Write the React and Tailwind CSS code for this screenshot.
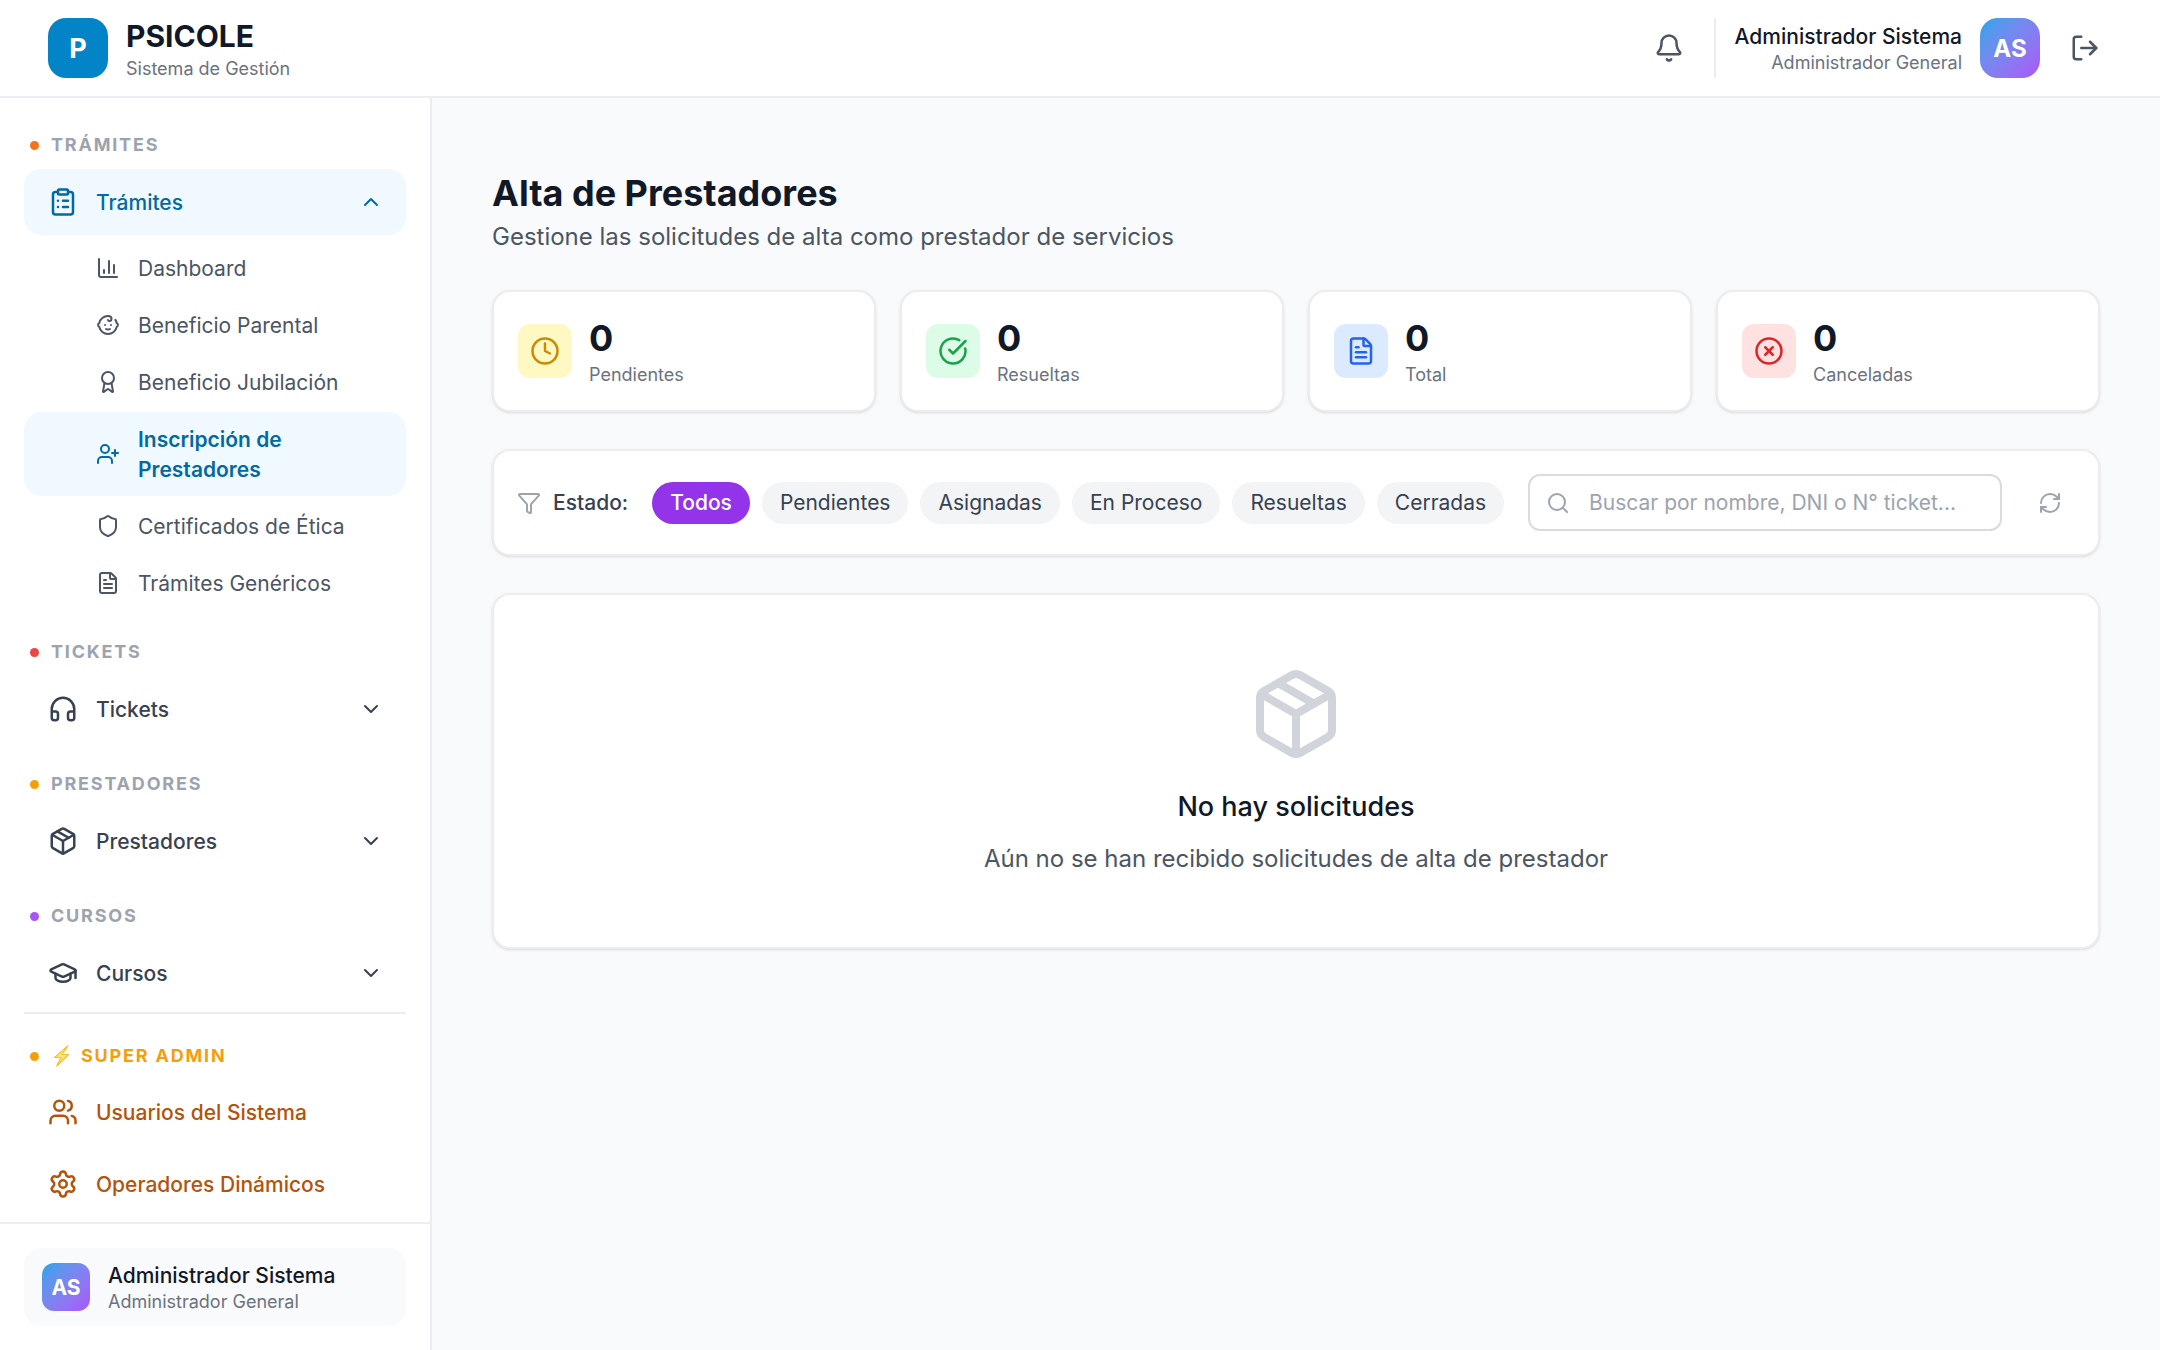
import {
  Award,
  Baby,
  Bell,
  ChartColumn,
  ChevronDown,
  ChevronUp,
  CircleCheckBig,
  CircleX,
  ClipboardList,
  Clock,
  FileText,
  Funnel,
  GraduationCap,
  Headphones,
  LogOut,
  Package,
  RefreshCw,
  Search,
  Settings,
  Shield,
  UserPlus,
  Users,
} from 'lucide-react'

const subItems = [
  { label: 'Dashboard', icon: ChartColumn },
  { label: 'Beneficio Parental', icon: Baby },
  { label: 'Beneficio Jubilación', icon: Award },
  { label: 'Inscripción de Prestadores', icon: UserPlus, active: true },
  { label: 'Certificados de Ética', icon: Shield },
  { label: 'Trámites Genéricos', icon: FileText },
]

const stats = [
  { label: 'Pendientes', icon: Clock, box: 'bg-[#fef9c3]', color: 'text-[#ca8a04]' },
  { label: 'Resueltas', icon: CircleCheckBig, box: 'bg-[#dcfce7]', color: 'text-[#16a34a]' },
  { label: 'Total', icon: FileText, box: 'bg-[#dbeafe]', color: 'text-[#2563eb]' },
  { label: 'Canceladas', icon: CircleX, box: 'bg-[#fee2e2]', color: 'text-[#dc2626]' },
]

const filters = ['Todos', 'Pendientes', 'Asignadas', 'En Proceso', 'Resueltas', 'Cerradas']

function SectionLabel({ dot, children }) {
  return (
    <div className="flex h-6 items-center gap-3 px-1.5 pt-0.5">
      <span className={`h-[9px] w-[9px] rounded-full ${dot}`} />
      <span className="text-[18px] leading-[22px] font-bold tracking-[1.8px] text-[#9ca3af] uppercase">{children}</span>
    </div>
  )
}

function NavItem({ icon: Icon, label, chevron, active, color = 'text-[#374151]' }) {
  const Chevron = active ? ChevronUp : ChevronDown
  return (
    <div className={`flex h-[66px] items-center gap-[18px] rounded-[18px] pr-[23px] pl-6 ${active ? 'bg-[#f0f9ff] text-[#0369a1]' : color}`}>
      <Icon size={30} strokeWidth={2} className="shrink-0" />
      <span className="mt-0.5 flex-1 text-[21px] leading-[30px] font-medium">{label}</span>
      {chevron && <Chevron size={24} strokeWidth={2} className="shrink-0" />}
    </div>
  )
}

function Sidebar() {
  return (
    <aside className="flex w-[432px] shrink-0 flex-col border-r-2 border-[#ebedf0] bg-white">
      <nav className="flex-1 px-6 pt-[34px]">
        <SectionLabel dot="bg-[#f97316]">Trámites</SectionLabel>
        <div className="mt-[13px]">
          <NavItem icon={ClipboardList} label="Trámites" chevron active />
        </div>
        <ul className="mt-1.5 flex flex-col gap-[3px]">
          {subItems.map((item) => (
            <li
              key={item.label}
              className={`flex items-center gap-[18px] rounded-[18px] py-3 pr-6 pl-[72px] text-[21px] leading-[30px] ${
                item.active ? 'bg-[#f0f9ff] font-semibold text-[#0369a1]' : 'text-[#4b5563]'
              }`}
            >
              <item.icon size={24} strokeWidth={2} className="shrink-0" />
              <span className="mt-px -mb-px">{item.label}</span>
            </li>
          ))}
        </ul>

        <div className="mt-[29px]">
          <SectionLabel dot="bg-[#ef4444]">Tickets</SectionLabel>
        </div>
        <div className="mt-[13px]">
          <NavItem icon={Headphones} label="Tickets" chevron />
        </div>

        <div className="mt-[29px]">
          <SectionLabel dot="bg-[#f59e0b]">Prestadores</SectionLabel>
        </div>
        <div className="mt-[13px]">
          <NavItem icon={Package} label="Prestadores" chevron />
        </div>

        <div className="mt-[29px]">
          <SectionLabel dot="bg-[#a855f7]">Cursos</SectionLabel>
        </div>
        <div className="mt-[13px]">
          <NavItem icon={GraduationCap} label="Cursos" chevron />
        </div>

        <div className="mt-1.5 border-t-2 border-[#ebedf0]" />

        <div className="mt-[29px] flex h-6 items-center gap-3 px-1.5 pt-0.5">
          <span className="h-[9px] w-[9px] rounded-full bg-[#f59e0b]" />
          <svg width="18" height="22" viewBox="0 0 18 22" aria-hidden="true" className="shrink-0">
            <path d="M16.8 1 3.5 12.5H10L5.7 21 17.5 9.5H11Z" fill="#fde68a" stroke="#fbbf24" strokeWidth="1.2" strokeLinejoin="round" />
          </svg>
          <span className="text-[18px] leading-[22px] font-bold tracking-[1.8px] text-[#f59e0b] uppercase">Super Admin</span>
        </div>
        <div className="mt-3 flex flex-col gap-1.5">
          <NavItem icon={Users} label="Usuarios del Sistema" color="text-[#b45309]" />
          <NavItem icon={Settings} label="Operadores Dinámicos" color="text-[#b45309]" />
        </div>
      </nav>

      <div className="border-t-2 border-[#ebedf0] px-6 py-6">
        <div className="flex h-[78px] items-center gap-[18px] rounded-[18px] bg-[#f9fafb] px-[18px]">
          <div className="flex h-12 w-12 items-center justify-center rounded-[12px] bg-gradient-to-br from-[#0ea5e9] to-[#a855f7] pt-0.5 text-[21px] font-bold text-white">
            AS
          </div>
          <div>
            <p className="pt-0.5 text-[21px] leading-[28px] font-medium text-[#111827]">Administrador Sistema</p>
            <p className="text-[18px] leading-6 text-[#6b7280]">Administrador General</p>
          </div>
        </div>
      </div>
    </aside>
  )
}

function Header() {
  return (
    <header className="flex h-[98px] shrink-0 items-center justify-between border-b-2 border-[#ebedf0] bg-white px-12">
      <div className="flex items-center gap-[18px]">
        <div className="flex h-[60px] w-[60px] items-center justify-center rounded-[18px] bg-[#0284c7] pt-0.5 text-[27px] font-bold text-white">
          P
        </div>
        <div>
          <h1 className="text-[30px] leading-[42px] font-bold text-[#111827]">PSICOLE</h1>
          <p className="text-[18px] leading-6 text-[#6b7280]">Sistema de Gestión</p>
        </div>
      </div>

      <div className="flex items-center gap-[18px]">
        <button aria-label="Notificaciones" className="p-3 text-[#4b5563]">
          <Bell size={30} strokeWidth={2} />
        </button>
        <div className="flex items-center gap-[18px] border-l-2 border-[#ebedf0] pl-[19px]">
          <div className="text-right">
            <p className="pt-0.5 text-[21px] leading-[28px] font-medium text-[#111827]">Administrador Sistema</p>
            <p className="text-[18px] leading-6 text-[#6b7280]">Administrador General</p>
          </div>
          <div className="flex h-[60px] w-[60px] items-center justify-center rounded-[18px] bg-gradient-to-br from-[#0ea5e9] to-[#a855f7] pt-0.5 text-[24px] font-bold text-white">
            AS
          </div>
        </div>
        <button aria-label="Salir" className="p-3 text-[#4b5563]">
          <LogOut size={30} strokeWidth={2} />
        </button>
      </div>
    </header>
  )
}

function Main() {
  return (
    <main className="min-w-0 flex-1 bg-[#f9fafb] px-[60px] pt-[71px]">
      <h2 className="text-[36px] leading-[48px] font-bold text-[#111827]">Alta de Prestadores</h2>
      <p className="mt-0.5 text-[24px] leading-9 text-[#4b5563]">Gestione las solicitudes de alta como prestador de servicios</p>

      <div className="mt-[35px] grid grid-cols-4 gap-6">
        {stats.map((stat) => (
          <div
            key={stat.label}
            className="flex h-[122px] items-center gap-[17px] rounded-[18px] border-2 border-[#ebedf0] bg-white px-6 shadow-sm"
          >
            <div className={`flex h-[54px] w-[54px] items-center justify-center rounded-[12px] ${stat.box} ${stat.color}`}>
              <stat.icon size={30} strokeWidth={2} />
            </div>
            <div className="pb-0.5">
              <p className="text-[36px] leading-[48px] font-bold text-[#111827]">0</p>
              <p className="mt-px text-[18px] leading-6 text-[#6b7280]">{stat.label}</p>
            </div>
          </div>
        ))}
      </div>

      <div className="mt-[37px] flex h-[107px] items-center rounded-[18px] border-2 border-[#ebedf0] bg-white pr-6 pl-[23px] shadow-sm">
        <Funnel size={24} strokeWidth={2} className="shrink-0 text-[#9ca3af]" />
        <span className="ml-3 pt-px text-[21px] font-medium text-[#374151]">Estado:</span>
        <div className="ml-6 flex gap-3">
          {filters.map((filter, i) => (
            <button
              key={filter}
              className={`h-[42px] rounded-full px-[18px] pt-px text-[21px] leading-[30px] ${
                i === 0 ? 'bg-[#9333ea] font-medium text-white' : 'bg-[#f3f4f6] text-[#374151]'
              }`}
            >
              {filter}
            </button>
          ))}
        </div>
        <div className="ml-6 flex h-[57px] min-w-0 flex-1 items-center gap-[19px] rounded-[12px] border-2 border-[#d8dbe1] px-4">
          <Search size={24} strokeWidth={2} className="shrink-0 text-[#9ca3af]" />
          <input
            placeholder="Buscar por nombre, DNI o N° ticket..."
            className="min-w-0 flex-1 bg-transparent pt-px text-[21px] outline-none placeholder:text-[#9ca3af]"
          />
        </div>
        <button aria-label="Actualizar" className="ml-6 p-3 text-[#9ca3af]">
          <RefreshCw size={24} strokeWidth={2} />
        </button>
      </div>

      <div className="mt-[37px] flex h-[356px] flex-col items-center rounded-[18px] border-2 border-[#ebedf0] bg-white pt-[71px] shadow-sm">
        <Package size={96} strokeWidth={2} className="text-[#d1d5db]" />
        <h3 className="mt-6 text-[27px] leading-[42px] font-medium text-[#111827]">No hay solicitudes</h3>
        <p className="mt-[13px] text-[24px] leading-9 text-[#4b5563]">Aún no se han recibido solicitudes de alta de prestador</p>
      </div>
    </main>
  )
}

export default function App() {
  return (
    <div className="flex h-[1350px] flex-col overflow-hidden bg-[#f9fafb] font-['Inter',sans-serif]">
      <Header />
      <div className="flex min-h-0 flex-1">
        <Sidebar />
        <Main />
      </div>
    </div>
  )
}
